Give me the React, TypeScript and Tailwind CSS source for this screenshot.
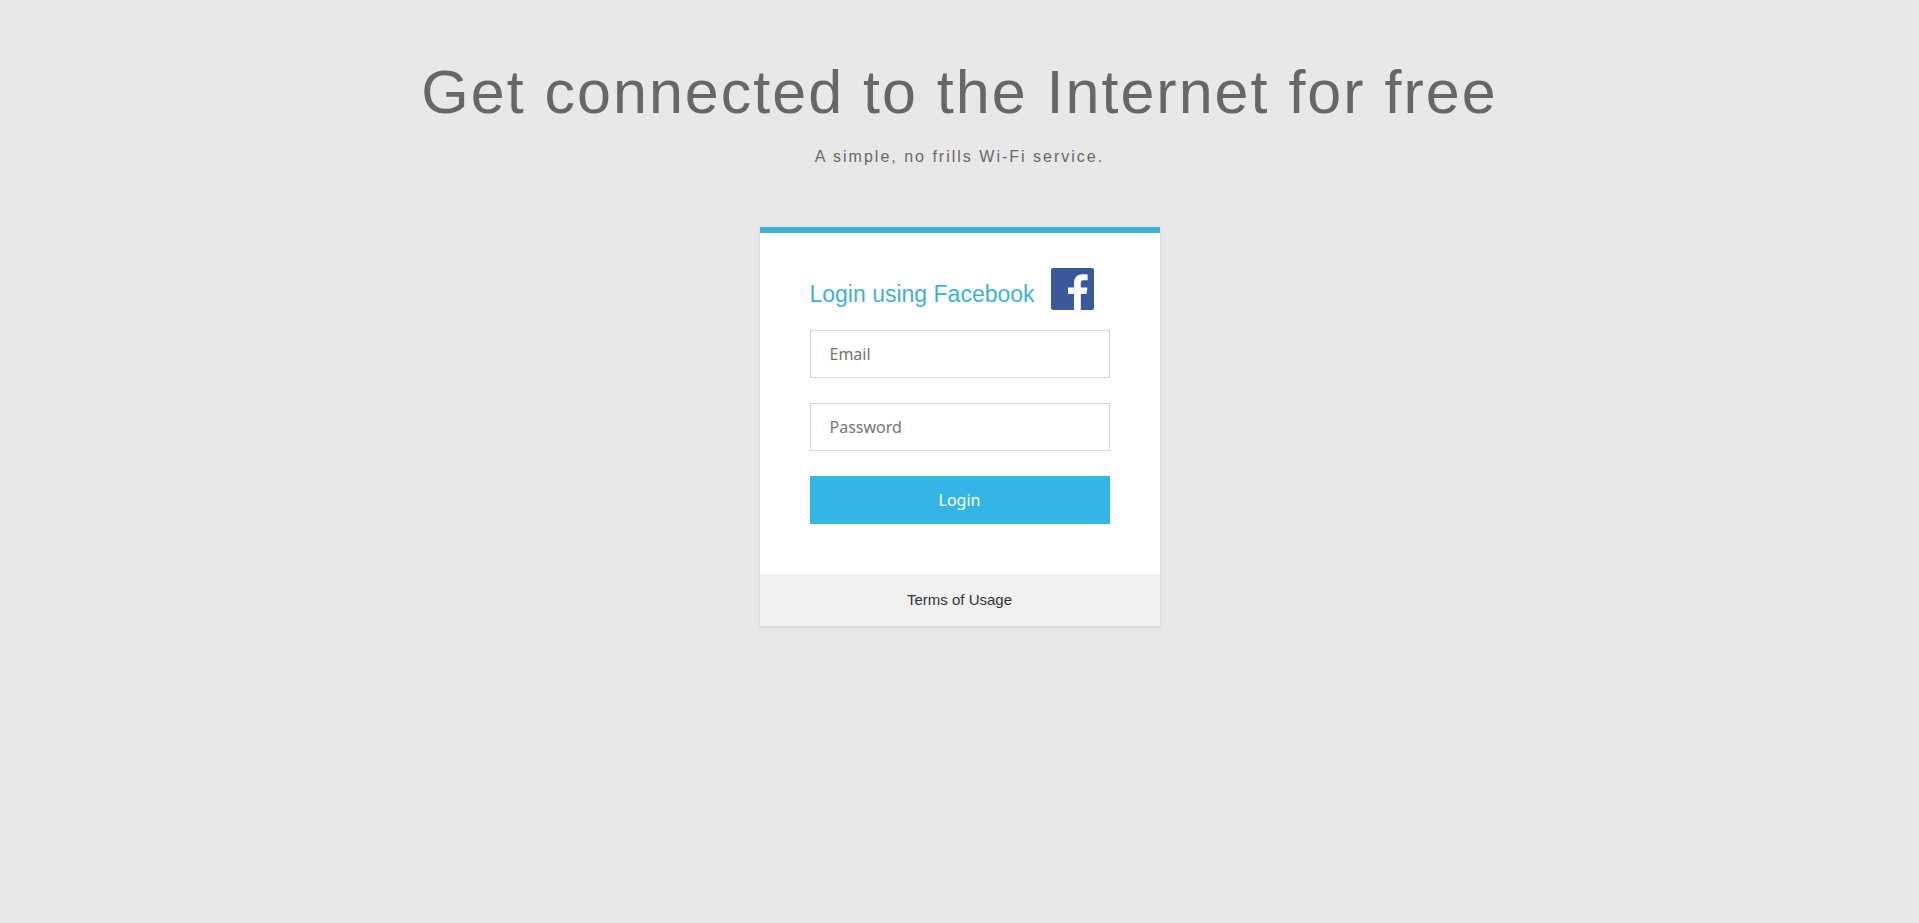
const fields = [
  { id: 'email', type: 'email', label: 'Email' },
  { id: 'password', type: 'password', label: 'Password' },
];

function FacebookLogo() {
  return (
    <svg viewBox="0 0 43 42" className="w-[43px] h-[42px]" aria-hidden="true">
      <rect width="43" height="42" rx="2" fill="#3a589b" />
      <path
        d="M23 42V26H17V19.5H23V15C23 9.2 26.5 6.2 31.6 6.2C34 6.2 36 6.3 36.6 6.4V12.2H33C30.2 12.2 29.8 13.6 29.8 15.5V19.5H36.4L35.5 26H29.8V42Z"
        fill="#fff"
      />
    </svg>
  )
}

function LoginCard() {
  return (
    <section className="w-full max-w-[400px] mx-auto bg-white border-t-6 border-[#3fb1d6] shadow-[0_1px_3px_rgba(0,0,0,0.1)]">
      <form className="px-[50px] pt-[35px] pb-[50px]" onSubmit={(e) => e.preventDefault()}>
        <div className="flex items-end gap-4 mb-5">
          <h2 className="text-[23px] leading-8 text-[#3fb1d6]">Login using Facebook</h2>
          <FacebookLogo />
        </div>
        <div className="flex flex-col gap-[25px]">
          {fields.map((field) => (
            <input
              key={field.id}
              id={field.id}
              type={field.type}
              placeholder={field.label}
              aria-label={field.label}
              className="w-full h-12 px-[19px] border border-[#d5d5d5] font-['Noto_Sans',sans-serif] text-base placeholder:text-[#757575]"
            />
          ))}
          <button type="submit" className="w-full h-12 bg-[#33b5e5] font-['Noto_Sans',sans-serif] text-base text-white">
            Login
          </button>
        </div>
      </form>
      <footer className="py-4 bg-[#f1f1f1] text-center text-[15px] leading-5 text-[#333]">
        <a href="#terms">Terms of Usage</a>
      </footer>
    </section>
  )
}

function App() {
  return (
    <main className="min-h-screen px-4 pt-[57px] pb-12 bg-[#e8e8e8] font-['Liberation_Sans',Arial,sans-serif]">
      <header className="mb-[60px] text-center text-[#666866]">
        <h1 className="text-[61px] leading-[70px] tracking-[2px]">Get connected to the Internet for free</h1>
        <p className="mt-5 text-base leading-5 tracking-[2px]">A simple, no frills Wi-Fi service.</p>
      </header>
      <LoginCard />
    </main>
  )
}

export default App;
